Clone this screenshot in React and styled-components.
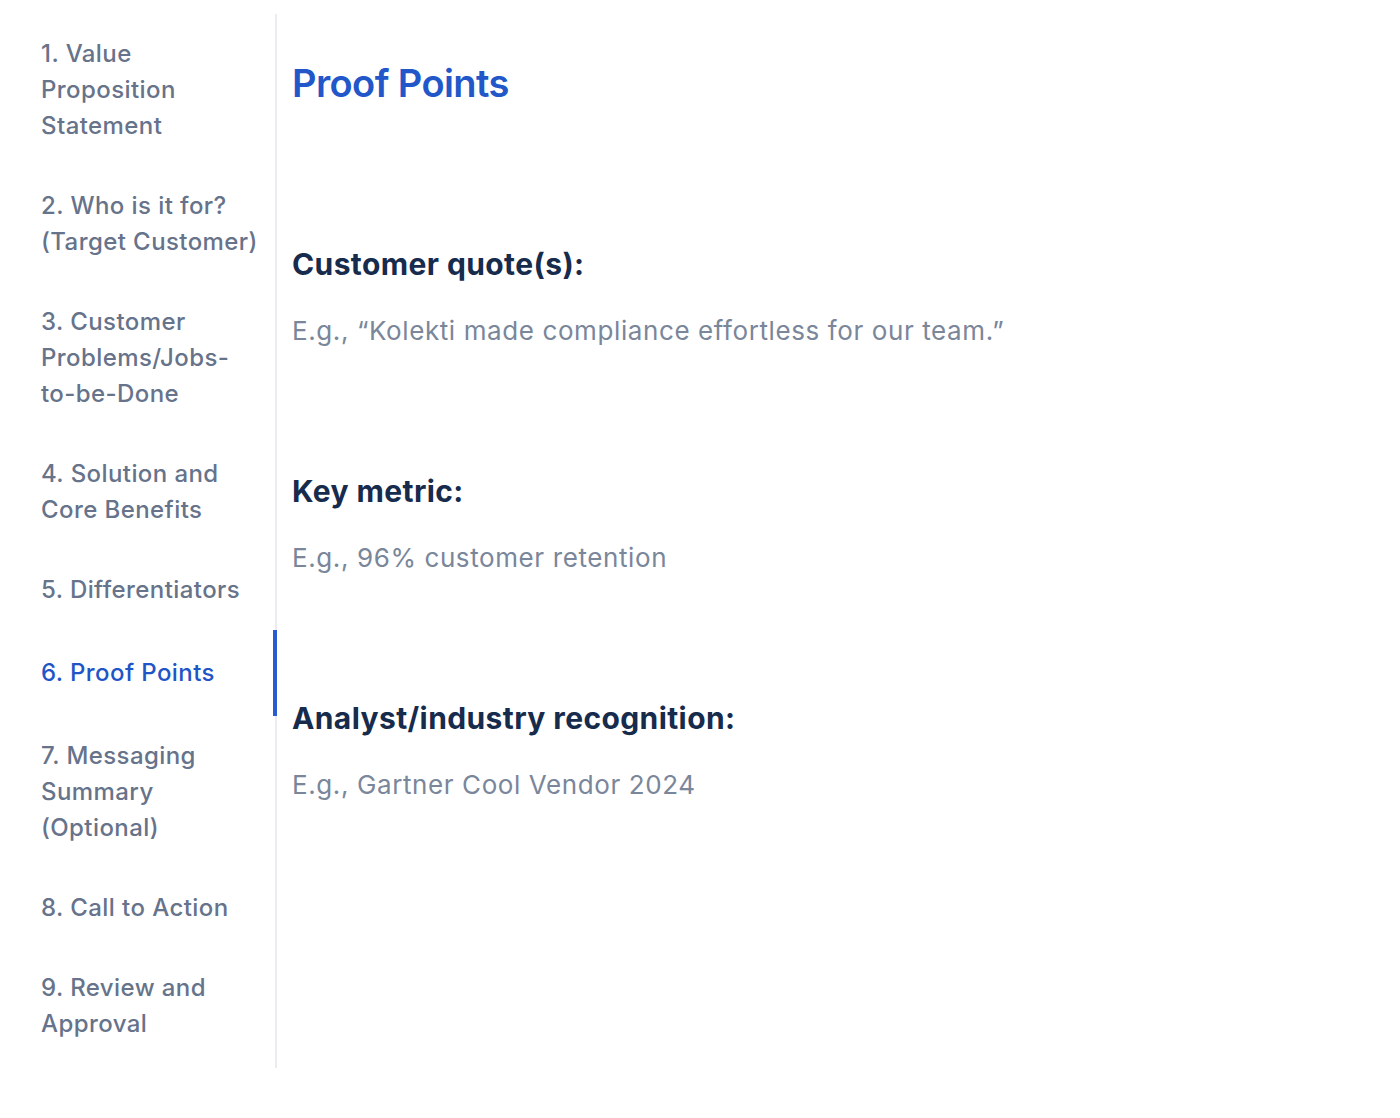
import React from "react";
import styled, { createGlobalStyle } from "styled-components";

const GlobalStyle = createGlobalStyle`
  html, body {
    margin: 0;
    padding: 0;
    background: #ffffff;
  }
  body {
    font-family: Inter, "Noto Sans", "Liberation Sans", sans-serif;
    -webkit-font-smoothing: antialiased;
  }
`;

const Page = styled.div`
  display: flex;
  align-items: flex-start;
  padding: 14px 0 0 16px;
  min-height: 1118px;
  box-sizing: border-box;
`;

const Sidebar = styled.nav`
  width: 261px;
  flex: none;
  box-sizing: border-box;
  border-right: 2px solid #ebecf0;
  padding: 0 15px 4px 25px;
  display: flex;
  flex-direction: column;
`;

const NavItem = styled.a`
  position: relative;
  display: block;
  padding: ${(p) => (p.$active ? "25px 0" : "22px 0")};
  font-size: 24px;
  line-height: 36px;
  font-weight: 500;
  letter-spacing: 0.42px;
  color: ${(p) => (p.$active ? "#1f55c7" : "#66738a")};
  text-decoration: none;
  cursor: pointer;

  &::after {
    content: "";
    display: ${(p) => (p.$active ? "block" : "none")};
    position: absolute;
    top: 0;
    bottom: 0;
    right: -17px;
    width: 4px;
    background: #2b5bd1;
  }
`;

const Main = styled.main`
  flex: 1;
  padding: 46px 0 0 15px;
`;

const Title = styled.h1`
  margin: 0 0 17px;
  font-size: 38px;
  line-height: 46px;
  font-weight: 600;
  letter-spacing: -0.6px;
  color: #2257c9;
`;

const Section = styled.section`
  padding-top: 122px;
`;

const Heading = styled.h2`
  margin: 0 0 27px;
  font-size: 30px;
  line-height: 39px;
  font-weight: 700;
  letter-spacing: 0.4px;
  color: #172b4d;
`;

const Hint = styled.p`
  margin: 0;
  font-size: 26px;
  line-height: 39px;
  font-weight: 400;
  letter-spacing: 0.6px;
  color: #7a869a;
`;

const navItems = [
  "1. Value Proposition Statement",
  "2. Who is it for? (Target Customer)",
  "3. Customer Problems/Jobs-to-be-Done",
  "4. Solution and Core Benefits",
  "5. Differentiators",
  "6. Proof Points",
  "7. Messaging Summary (Optional)",
  "8. Call to Action",
  "9. Review and Approval",
];

const sections = [
  {
    heading: "Customer quote(s):",
    hint: "E.g., \u201CKolekti made compliance effortless for our team.\u201D",
  },
  { heading: "Key metric:", hint: "E.g., 96% customer retention" },
  {
    heading: "Analyst/industry recognition:",
    hint: "E.g., Gartner Cool Vendor 2024",
  },
];

export default function App() {
  return (
    <>
      <GlobalStyle />
      <Page>
        <Sidebar>
          {navItems.map((label, i) => (
            <NavItem key={label} $active={i === 5}>
              {label}
            </NavItem>
          ))}
        </Sidebar>
        <Main>
          <Title>Proof Points</Title>
          {sections.map((s) => (
            <Section key={s.heading}>
              <Heading>{s.heading}</Heading>
              <Hint>{s.hint}</Hint>
            </Section>
          ))}
        </Main>
      </Page>
    </>
  );
}
